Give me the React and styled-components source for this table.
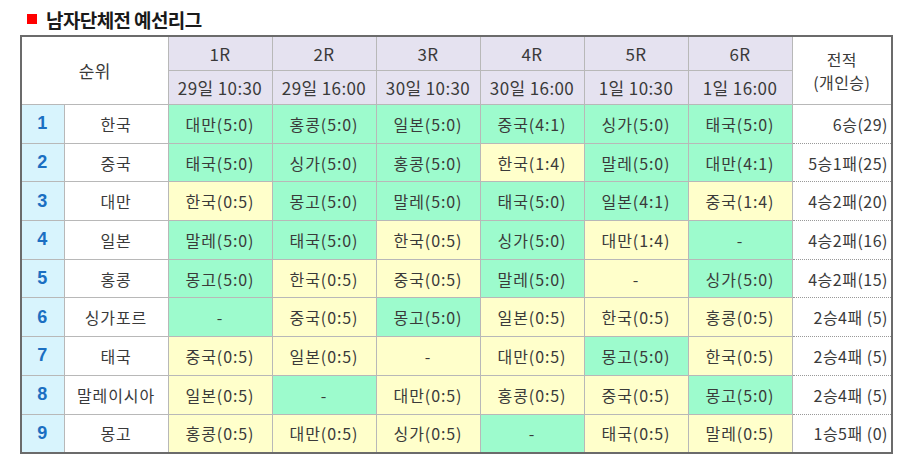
import React from "react";
import styled, { createGlobalStyle } from "styled-components";

const G = "g";
const Y = "y";

const ROUNDS = [
  { r: "1R", time: "29일 10:30" },
  { r: "2R", time: "29일 16:00" },
  { r: "3R", time: "30일 10:30" },
  { r: "4R", time: "30일 16:00" },
  { r: "5R", time: "1일 10:30" },
  { r: "6R", time: "1일 16:00" },
];

const ROWS = [
  { team: "한국", games: [["대만(5:0)", G], ["홍콩(5:0)", G], ["일본(5:0)", G], ["중국(4:1)", G], ["싱가(5:0)", G], ["태국(5:0)", G]], record: "6승(29)" },
  { team: "중국", games: [["태국(5:0)", G], ["싱가(5:0)", G], ["홍콩(5:0)", G], ["한국(1:4)", Y], ["말레(5:0)", G], ["대만(4:1)", G]], record: "5승1패(25)" },
  { team: "대만", games: [["한국(0:5)", Y], ["몽고(5:0)", G], ["말레(5:0)", G], ["태국(5:0)", G], ["일본(4:1)", G], ["중국(1:4)", Y]], record: "4승2패(20)" },
  { team: "일본", games: [["말레(5:0)", G], ["태국(5:0)", G], ["한국(0:5)", Y], ["싱가(5:0)", G], ["대만(1:4)", Y], ["-", G]], record: "4승2패(16)" },
  { team: "홍콩", games: [["몽고(5:0)", G], ["한국(0:5)", Y], ["중국(0:5)", Y], ["말레(5:0)", G], ["-", Y], ["싱가(5:0)", G]], record: "4승2패(15)" },
  { team: "싱가포르", games: [["-", G], ["중국(0:5)", Y], ["몽고(5:0)", G], ["일본(0:5)", Y], ["한국(0:5)", Y], ["홍콩(0:5)", Y]], record: "2승4패 (5)" },
  { team: "태국", games: [["중국(0:5)", Y], ["일본(0:5)", Y], ["-", Y], ["대만(0:5)", Y], ["몽고(5:0)", G], ["한국(0:5)", Y]], record: "2승4패 (5)" },
  { team: "말레이시아", games: [["일본(0:5)", Y], ["-", G], ["대만(0:5)", Y], ["홍콩(0:5)", Y], ["중국(0:5)", Y], ["몽고(5:0)", G]], record: "2승4패 (5)" },
  { team: "몽고", games: [["홍콩(0:5)", Y], ["대만(0:5)", Y], ["싱가(0:5)", Y], ["-", G], ["태국(0:5)", Y], ["말레(0:5)", Y]], record: "1승5패 (0)" },
];

const GlobalStyle = createGlobalStyle`
  body {
    margin: 0;
    background: #fff;
    font-family: "Noto Sans CJK KR", "Noto Sans", sans-serif;
    color: #333;
  }
`;

const Page = styled.div`
  padding: 7px 0 0 20px;
`;

const Title = styled.h3`
  display: flex;
  align-items: center;
  gap: 9px;
  margin: 0 0 4px 7px;
  height: 24px;
  font-size: 19px;
  font-weight: 700;
  color: #1a1a1a;
  letter-spacing: -0.6px;
`;

const RedMark = styled.span`
  width: 10px;
  height: 10px;
  background: #ff0000;
`;

const Table = styled.table`
  border-collapse: collapse;
  table-layout: fixed;
  width: 871px;
  border: 2px solid #6b6b6b;
  font-size: 16px;
  color: #3a3a3a;
  letter-spacing: 0.9px;
`;

const Head = styled.th`
  font-weight: 400;
  font-size: 17px;
  letter-spacing: 0.4px;
  height: 33px;
  padding: 0;
  text-align: center;
  border: 1px solid #b8b8b8;
  background: ${({ $plain }) => ($plain ? "#fff" : "#e5e2f0")};
  border-bottom: ${({ $dotted }) => ($dotted ? "1px dotted #999" : "1px solid #b8b8b8")};
  line-height: 21px;
`;

const RecordHead = styled(Head)`
  font-size: 16px;
  line-height: 23px;
`;

const Cell = styled.td`
  height: 37.7px;
  padding: 0;
  text-align: center;
  border: 1px solid #b8b8b8;
  background: ${({ $tone }) =>
    $tone === "g" ? "#9dfbcd" : $tone === "y" ? "#ffffcb" : "#fff"};
`;

const Rank = styled(Cell)`
  background: #d8f4fd;
  color: #1b6fc2;
  font-weight: 700;
  font-family: "Liberation Sans", Arial, sans-serif;
  font-size: 18px;
`;

const Record = styled(Cell)`
  text-align: right;
  padding-right: 3px;
  letter-spacing: 0.5px;
  border-top: 1px dotted #999;
  border-bottom: 1px dotted #999;
`;

export default function App() {
  return (
    <Page>
      <GlobalStyle />
      <Title>
        <RedMark />
        남자단체전 예선리그
      </Title>
      <Table>
        <colgroup>
          <col style={{ width: 43 }} />
          <col style={{ width: 104 }} />
          {ROUNDS.map((r) => (
            <col key={r.r} style={{ width: 104 }} />
          ))}
          <col style={{ width: 100 }} />
        </colgroup>
        <thead>
          <tr>
            <Head $plain colSpan={2} rowSpan={2}>
              순위
            </Head>
            {ROUNDS.map((r) => (
              <Head key={r.r} $dotted>
                {r.r}
              </Head>
            ))}
            <RecordHead $plain rowSpan={2}>
              전적
              <br />
              (개인승)
            </RecordHead>
          </tr>
          <tr>
            {ROUNDS.map((r) => (
              <Head key={r.time}>{r.time}</Head>
            ))}
          </tr>
        </thead>
        <tbody>
          {ROWS.map((row, i) => (
            <tr key={row.team}>
              <Rank>{i + 1}</Rank>
              <Cell>{row.team}</Cell>
              {row.games.map(([text, tone], j) => (
                <Cell key={j} $tone={tone}>
                  {text}
                </Cell>
              ))}
              <Record>{row.record}</Record>
            </tr>
          ))}
        </tbody>
      </Table>
    </Page>
  );
}
